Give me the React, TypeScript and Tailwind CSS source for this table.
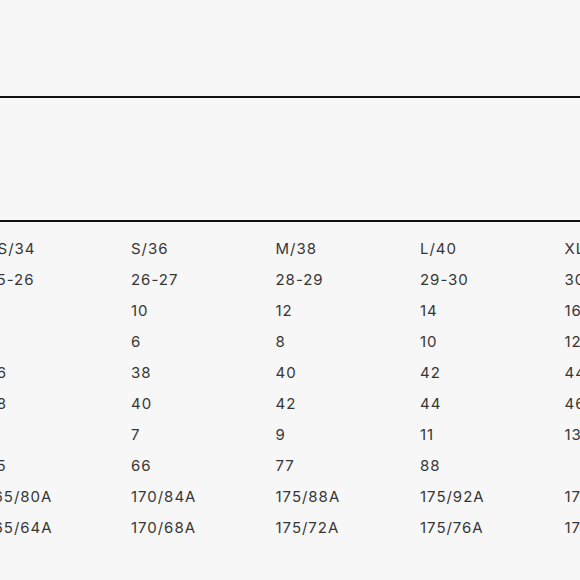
import React from "react";

const rows: string[][] = [
  ["XS/34", "S/36", "M/38", "L/40", "XL/42"],
  ["25-26", "26-27", "28-29", "29-30", "30-31"],
  ["8", "10", "12", "14", "16"],
  ["4", "6", "8", "10", "12"],
  ["36", "38", "40", "42", "44"],
  ["38", "40", "42", "44", "46"],
  ["5", "7", "9", "11", "13"],
  ["55", "66", "77", "88", ""],
  ["165/80A", "170/84A", "175/88A", "175/92A", "175/96A"],
  ["165/64A", "170/68A", "175/72A", "175/76A", "175/80A"],
];

export default function App() {
  return (
    <div
      className="w-[580px] h-[580px] overflow-hidden bg-[#f7f7f7] text-[#363636]"
      style={{ fontFamily: "Inter, 'Liberation Sans', sans-serif" }}
    >
      <div className="h-[96px]" />
      <div className="h-[2px] bg-[#111111]" />
      <div className="h-[122px]" />
      <div className="h-[2px] bg-[#111111]" />
      <div className="h-[12px]" />
      <div className="ml-[-13.5px] flex flex-col">
        {rows.map((r, i) => (
          <div key={i} className="flex h-[31px] items-center text-[15px] tracking-[0.065em]">
            {r.map((c, j) => (
              <div key={j} className="w-[144.5px] shrink-0 whitespace-nowrap">
                {c}
              </div>
            ))}
          </div>
        ))}
      </div>
    </div>
  );
}
